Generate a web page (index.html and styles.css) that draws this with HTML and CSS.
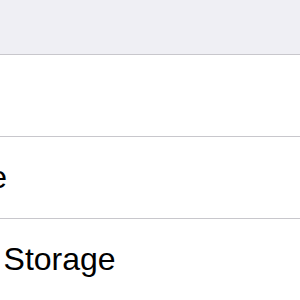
FILE: index.html
```html
<!DOCTYPE html>
<html>
<head>
<meta charset="utf-8">
<link rel="stylesheet" href="styles.css">
</head>
<body>
<div class="screen">
  <div class="header"></div>
  <div class="list">
    <div class="row"><span class="label">iCloud</span></div>
    <div class="row"><span class="label">Continue</span></div>
    <div class="row"><span class="label">Manage Storage</span></div>
  </div>
</div>
</body>
</html>
```
FILE: styles.css
```css
html, body {
  margin: 0;
  padding: 0;
  background: #ffffff;
}
.screen {
  width: 300px;
  height: 300px;
  overflow: hidden;
  font-family: "Liberation Sans", Arial, sans-serif;
  color: #000000;
}
.header {
  height: 54px;
  background: #efeff4;
  border-bottom: 1px solid #c8c7cc;
}
.list {
  margin-left: -121px;
}
.row {
  height: 81px;
  display: flex;
  align-items: center;
  border-bottom: 1px solid #c8c7cc;
  white-space: nowrap;
}
.row:last-child {
  border-bottom: none;
}
.label {
  font-size: 32px;
}
```
